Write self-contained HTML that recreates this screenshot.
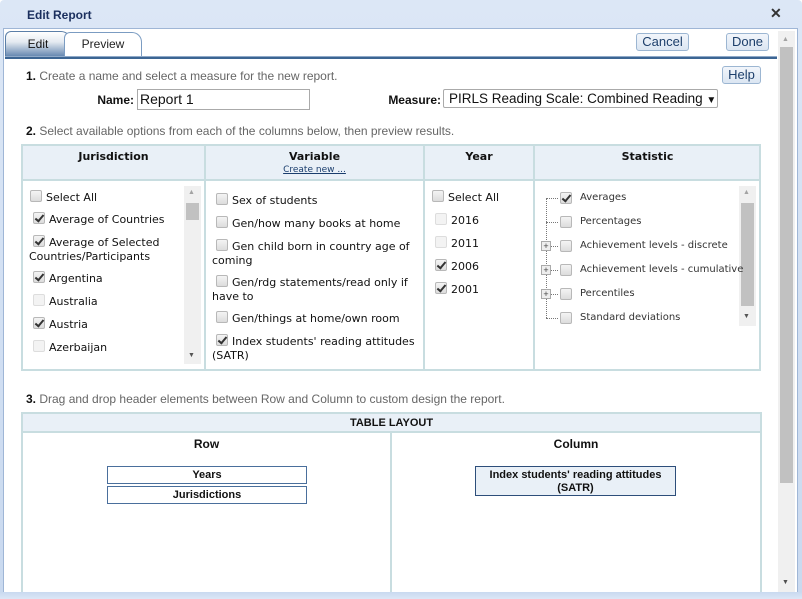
<!DOCTYPE html>
<html><head><meta charset="utf-8"><style>
*{box-sizing:border-box;margin:0;padding:0}
body{width:802px;height:599px;overflow:hidden;background:#fff;font-family:"Liberation Sans",sans-serif;position:relative}
.a{position:absolute}
.v{font-family:"DejaVu Sans",sans-serif;font-size:11px;color:#111;white-space:nowrap}
.cb{position:absolute;width:12px;height:12px;border:1px solid #b8b8b8;border-radius:2px;background:linear-gradient(#f4f4f4,#dcdcdc)}
.cb.d{border-color:#ddd;background:#f3f3f3}
.cb.c::after{content:"";position:absolute;left:3px;top:0px;width:3px;height:7px;border:solid #333;border-width:0 2px 2px 0;transform:rotate(40deg)}
.btn{position:absolute;height:18px;border:1px solid #9cb6d2;border-radius:3px;background:linear-gradient(#f2f6fb,#dbe6f2);font-size:13px;color:#1d3f6b;text-align:center;line-height:16px}
.hd{font-family:"DejaVu Sans",sans-serif;font-weight:bold;font-size:11px;color:#111;text-align:center}
.g{font-size:12px;color:#666}
.g b{color:#111}
.sb{position:absolute;background:#f0f0f0}
</style></head><body>
<div class="a" style="left:0;top:0;width:802px;height:599px;background:linear-gradient(#dce7f6,#c9d9ef);border-radius:4px"></div>
<div class="a" style="left:27px;top:8px;font-size:12px;font-weight:bold;color:#1b2f5e">Edit Report</div>
<div class="a" style="left:770px;top:5px;font-size:14px;font-weight:bold;color:#333">✕</div>
<div class="a" style="left:3px;top:28px;width:795px;height:567px;background:#fff;border:1px solid #9fb6d6"></div>
<div class="a" style="left:5px;top:31px;width:66px;height:26px;border:1px solid #5b7fa8;border-bottom:none;border-radius:6px 10px 0 0;background:linear-gradient(#fff 0%,#e4eaf1 40%,#5f82ad 100%);font-size:12px;text-align:center;line-height:24px;color:#111">Edit</div>
<div class="a" style="left:64px;top:32px;width:78px;height:25px;border:1px solid #7b9cc2;border-bottom:none;border-radius:6px 10px 0 0;background:#fff;font-size:12px;line-height:23px;text-align:center;color:#222">Preview</div>
<div class="a" style="left:5px;top:56px;width:772px;height:3px;background:#3c6593;border-top:1px solid #8fa9c8"></div>
<div class="btn" style="left:636px;top:33px;width:53px">Cancel</div>
<div class="btn" style="left:726px;top:33px;width:43px">Done</div>
<div class="btn" style="left:722px;top:66px;width:39px">Help</div>
<div class="sb" style="left:778px;top:31px;width:17px;height:561px"></div>
<div class="a" style="left:780px;top:47px;width:13px;height:436px;background:#c1c1c1"></div>
<div class="a" style="left:782px;top:36px;font-size:7px;color:#a3a3a3">▲</div>
<div class="a" style="left:782px;top:579px;font-size:7px;color:#505050">▼</div>
<div class="a g" style="left:26px;top:69px"><b>1.</b> Create a name and select a measure for the new report.</div>
<div class="a hd" style="right:668px;top:93px;font-size:12px;font-family:'Liberation Sans',sans-serif">Name:</div>
<div class="a" style="left:137px;top:89px;width:173px;height:21px;border:1px solid #aaa;font-size:14px;line-height:19px;padding-left:2px;color:#111">Report 1</div>
<div class="a hd" style="right:361px;top:93px;font-size:12px;font-family:'Liberation Sans',sans-serif">Measure:</div>
<div class="a" style="left:443px;top:89px;width:275px;height:19px;border:1px solid #aaa;border-radius:2px;font-size:13.5px;line-height:17px;padding-left:5px;color:#111;white-space:nowrap;overflow:hidden">PIRLS Reading Scale: Combined Reading <span style="font-size:10px">▼</span></div>
<div class="a g" style="left:26px;top:124px"><b>2.</b> Select available options from each of the columns below, then preview results.</div>
<div class="a" style="left:21px;top:144px;width:740px;height:227px;border:2px solid #c8dde0"></div>
<div class="a" style="left:23px;top:146px;width:736px;height:35px;background:#e9f0f7;border-bottom:2px solid #c8dde0"></div>
<div class="a" style="left:204px;top:146px;width:2px;height:223px;background:#c8dde0"></div>
<div class="a" style="left:423px;top:146px;width:2px;height:223px;background:#c8dde0"></div>
<div class="a" style="left:533px;top:146px;width:2px;height:223px;background:#c8dde0"></div>
<div class="a hd" style="left:23px;top:150px;width:181px">Jurisdiction</div>
<div class="a hd" style="left:206px;top:150px;width:217px">Variable</div>
<div class="a" style="left:206px;top:165px;width:217px;text-align:center;font-family:'DejaVu Sans',sans-serif;font-size:9px;color:#1a3d6d;text-decoration:underline">Create new ...</div>
<div class="a hd" style="left:425px;top:150px;width:108px">Year</div>
<div class="a hd" style="left:535px;top:150px;width:225px">Statistic</div>
<div class="sb" style="left:184px;top:186px;width:17px;height:178px"></div>
<div class="a" style="left:186px;top:203px;width:13px;height:17px;background:#c1c1c1"></div>
<div class="a" style="left:188px;top:189px;font-size:7px;color:#a3a3a3">▲</div>
<div class="a" style="left:188px;top:352px;font-size:7px;color:#555">▼</div>
<div class="cb" style="left:30px;top:190px"></div><div class="a v" style="left:46px;top:191px">Select All</div>
<div class="cb c" style="left:33px;top:212px"></div><div class="a v" style="left:49px;top:213px">Average of Countries</div>
<div class="cb c" style="left:33px;top:235px"></div><div class="a v" style="left:49px;top:236px">Average of Selected</div>
<div class="a v" style="left:29px;top:250px">Countries/Participants</div>
<div class="cb c" style="left:33px;top:271px"></div><div class="a v" style="left:49px;top:272px">Argentina</div>
<div class="cb d" style="left:33px;top:294px"></div><div class="a v" style="left:49px;top:295px">Australia</div>
<div class="cb c" style="left:33px;top:317px"></div><div class="a v" style="left:49px;top:318px">Austria</div>
<div class="cb d" style="left:33px;top:340px"></div><div class="a v" style="left:49px;top:341px">Azerbaijan</div>
<div class="cb" style="left:216px;top:193px"></div><div class="a v" style="left:232px;top:194px">Sex of students</div>
<div class="cb" style="left:216px;top:216px"></div><div class="a v" style="left:232px;top:217px">Gen/how many books at home</div>
<div class="cb" style="left:216px;top:239px"></div><div class="a v" style="left:232px;top:240px">Gen child born in country age of</div>
<div class="a v" style="left:212px;top:254px">coming</div>
<div class="cb" style="left:216px;top:275px"></div><div class="a v" style="left:232px;top:276px">Gen/rdg statements/read only if</div>
<div class="a v" style="left:212px;top:290px">have to</div>
<div class="cb" style="left:216px;top:311px"></div><div class="a v" style="left:232px;top:312px">Gen/things at home/own room</div>
<div class="cb c" style="left:216px;top:334px"></div><div class="a v" style="left:232px;top:335px">Index students' reading attitudes</div>
<div class="a v" style="left:212px;top:349px">(SATR)</div>
<div class="cb" style="left:432px;top:190px"></div><div class="a v" style="left:448px;top:191px">Select All</div>
<div class="cb d" style="left:435px;top:213px"></div><div class="a v" style="left:451px;top:214px">2016</div>
<div class="cb d" style="left:435px;top:236px"></div><div class="a v" style="left:451px;top:237px">2011</div>
<div class="cb c" style="left:435px;top:259px"></div><div class="a v" style="left:451px;top:260px">2006</div>
<div class="cb c" style="left:435px;top:282px"></div><div class="a v" style="left:451px;top:283px">2001</div>
<div class="sb" style="left:739px;top:186px;width:17px;height:140px"></div>
<div class="a" style="left:741px;top:203px;width:13px;height:103px;background:#c1c1c1"></div>
<div class="a" style="left:743px;top:189px;font-size:7px;color:#a3a3a3">▲</div>
<div class="a" style="left:743px;top:313px;font-size:7px;color:#555">▼</div>
<div class="a" style="left:546px;top:198px;width:1px;height:120px;border-left:1px dotted #777"></div>
<div class="a" style="left:546px;top:198px;width:12px;border-top:1px dotted #777"></div>
<div class="a" style="left:546px;top:222px;width:12px;border-top:1px dotted #777"></div>
<div class="a" style="left:546px;top:246px;width:12px;border-top:1px dotted #777"></div>
<div class="a" style="left:546px;top:270px;width:12px;border-top:1px dotted #777"></div>
<div class="a" style="left:546px;top:294px;width:12px;border-top:1px dotted #777"></div>
<div class="a" style="left:546px;top:318px;width:12px;border-top:1px dotted #777"></div>
<div class="a" style="left:541px;top:241px;width:10px;height:10px;border:1px solid #aaa;background:#eee;font-size:9px;line-height:8px;text-align:center;color:#444">+</div>
<div class="a" style="left:541px;top:265px;width:10px;height:10px;border:1px solid #aaa;background:#eee;font-size:9px;line-height:8px;text-align:center;color:#444">+</div>
<div class="a" style="left:541px;top:289px;width:10px;height:10px;border:1px solid #aaa;background:#eee;font-size:9px;line-height:8px;text-align:center;color:#444">+</div>
<div class="cb c" style="left:560px;top:192px"></div><div class="a v" style="left:580px;top:192px;font-size:10px;color:#333">Averages</div>
<div class="cb" style="left:560px;top:216px"></div><div class="a v" style="left:580px;top:216px;font-size:10px;color:#333">Percentages</div>
<div class="cb" style="left:560px;top:240px"></div><div class="a v" style="left:580px;top:240px;font-size:10px;color:#333">Achievement levels - discrete</div>
<div class="cb" style="left:560px;top:264px"></div><div class="a v" style="left:580px;top:264px;font-size:10px;color:#333">Achievement levels - cumulative</div>
<div class="cb" style="left:560px;top:288px"></div><div class="a v" style="left:580px;top:288px;font-size:10px;color:#333">Percentiles</div>
<div class="cb" style="left:560px;top:312px"></div><div class="a v" style="left:580px;top:312px;font-size:10px;color:#333">Standard deviations</div>
<div class="a g" style="left:26px;top:392px"><b>3.</b> Drag and drop header elements between Row and Column to custom design the report.</div>
<div class="a" style="left:21px;top:412px;width:741px;height:185px;border:2px solid #c8dde0;border-bottom:none"></div>
<div class="a" style="left:23px;top:414px;width:737px;height:19px;background:#e9f0f7;border-bottom:2px solid #c8dde0;font-size:11px;font-weight:bold;text-align:center;line-height:18px;color:#111">TABLE LAYOUT</div>
<div class="a" style="left:390px;top:433px;width:2px;height:164px;background:#c8dde0"></div>
<div class="a" style="left:23px;top:437px;width:367px;text-align:center;font-size:12px;font-weight:bold;color:#111">Row</div>
<div class="a" style="left:392px;top:437px;width:368px;text-align:center;font-size:12px;font-weight:bold;color:#111">Column</div>
<div class="a" style="left:107px;top:466px;width:200px;height:18px;border:1px solid #4a6f9c;font-size:11px;font-weight:bold;text-align:center;line-height:16px;color:#111">Years</div>
<div class="a" style="left:107px;top:486px;width:200px;height:18px;border:1px solid #4a6f9c;font-size:11px;font-weight:bold;text-align:center;line-height:16px;color:#111">Jurisdictions</div>
<div class="a" style="left:475px;top:466px;width:201px;height:30px;border:1px solid #2d4e7a;background:#e9f0f7;font-size:11px;font-weight:bold;text-align:center;line-height:13px;padding-top:2px;color:#111">Index students' reading attitudes<br>(SATR)</div>
<div class="a" style="left:0;top:592px;width:802px;height:7px;background:linear-gradient(#c9d9ef,#dce7f6)"></div>
</body></html>
